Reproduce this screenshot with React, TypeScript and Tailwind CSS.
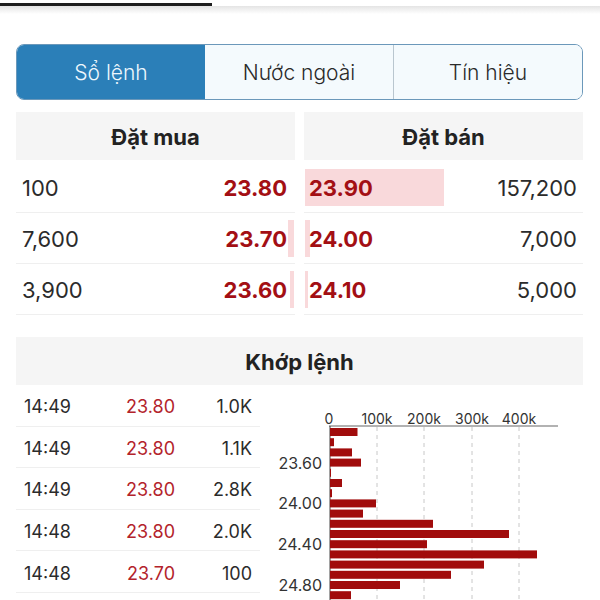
import React from "react";

const bids = [
  { qty: "100", price: "23.80", bar: 0 },
  { qty: "7,600", price: "23.70", bar: 6 },
  { qty: "3,900", price: "23.60", bar: 4 },
];

const asks = [
  { qty: "157,200", price: "23.90", bar: 139 },
  { qty: "7,000", price: "24.00", bar: 5 },
  { qty: "5,000", price: "24.10", bar: 3 },
];

const trades = [
  { time: "14:49", price: "23.80", vol: "1.0K" },
  { time: "14:49", price: "23.80", vol: "1.1K" },
  { time: "14:49", price: "23.80", vol: "2.8K" },
  { time: "14:48", price: "23.80", vol: "2.0K" },
  { time: "14:48", price: "23.70", vol: "100" },
];

const volumes = [27.5, 4, 22, 31, 1, 12, 2, 46, 33, 103, 179, 97, 207, 154, 121, 70, 21];

function VolumeChart() {
  // page coords shifted by (260, 385)
  const ox = 70;
  const ticks = [
    { x: 69, label: "0" },
    { x: 117, label: "100k" },
    { x: 164, label: "200k" },
    { x: 212, label: "300k" },
    { x: 259, label: "400k" },
  ];
  const ylabels = [
    { i: 3, label: "23.60" },
    { i: 7, label: "24.00" },
    { i: 11, label: "24.40" },
    { i: 15, label: "24.80" },
  ];
  return (
    <svg width="323" height="215" className="block" style={{ fontFamily: "Inter, sans-serif" }}>
      {ticks.slice(1).map((t) => (
        <line key={t.x} x1={t.x} x2={t.x} y1={42} y2={215} stroke="#c8c8c8" strokeWidth="1" strokeDasharray="4 4" />
      ))}
      {ticks.map((t) => (
        <text key={t.label} x={t.x} y={38.5} textAnchor="middle" fontSize="14" fill="#333">
          {t.label}
        </text>
      ))}
      <line x1={69} x2={298} y1={41} y2={41} stroke="#999" strokeWidth="1.5" />
      <line x1={ox} x2={ox} y1={41} y2={215} stroke="#444" strokeWidth="1" />
      {volumes.map((w, i) => (
        <rect key={i} x={ox} y={43 + i * 10.2} width={w} height={8} fill="#a10c0c" />
      ))}
      {ylabels.map((l) => (
        <text key={l.label} x={62} y={43 + l.i * 10.2 + 10} textAnchor="end" fontSize="16" fill="#333">
          {l.label}
        </text>
      ))}
    </svg>
  );
}

export default function App() {
  return (
    <div className="w-[600px] h-[600px] bg-white overflow-hidden text-[#222]" style={{ fontFamily: "Inter, 'Noto Sans', sans-serif" }}>
      <div className="pt-[3px]">
        <div className="h-[3px] w-[212px] bg-[#1f1f1f]" />
        <div className="h-[8px] bg-gradient-to-b from-[#e4e4e4] to-white" />
      </div>

      <div className="pl-4 pr-[17px]">
        {/* tabs */}
        <div className="mt-[30px] h-[56px] flex rounded-lg border border-[#6b98ba] overflow-hidden text-[21px] font-light">
          <div className="flex-1 flex items-center justify-center pt-[2px] bg-[#2b7fb8] text-[#eef7fd]">Sổ lệnh</div>
          <div className="flex-1 flex items-center justify-center pt-[2px] bg-[#f4fafd] text-[#2a2a2a] border-r border-[#b9c6cf]">
            Nước ngoài
          </div>
          <div className="flex-1 flex items-center justify-center pt-[2px] bg-[#f4fafd] text-[#2a2a2a]">Tín hiệu</div>
        </div>

        {/* order book */}
        <div className="mt-3 grid grid-cols-2 gap-x-[9px]">
          <div>
            <div className="h-[48px] bg-[#f5f5f5] flex items-center justify-center pt-[3px] text-[22px] font-bold">Đặt mua</div>
            <div className="mt-[2px]">
              {bids.map((b) => (
                <div key={b.price} className="relative h-[51px] border-b border-[#efefef] flex items-center justify-between pt-[3px] pl-[6px] pr-[8px]">
                  {b.bar > 0 && (
                    <div className="absolute right-[1px] top-[7px] bottom-[6px] bg-[#f9d9db]" style={{ width: b.bar }} />
                  )}
                  <span className="relative text-[22px] text-[#2b2b2b]">{b.qty}</span>
                  <span className="relative text-[22px] font-bold text-[#a30f14]">{b.price}</span>
                </div>
              ))}
            </div>
          </div>
          <div>
            <div className="h-[48px] bg-[#f5f5f5] flex items-center justify-center pt-[3px] text-[22px] font-bold">Đặt bán</div>
            <div className="mt-[2px]">
              {asks.map((a) => (
                <div key={a.price} className="relative h-[51px] border-b border-[#efefef] flex items-center justify-between pt-[3px] pl-[5px] pr-[6px]">
                  <div className="absolute left-[1px] top-[7px] bottom-[6px] bg-[#f9d9db]" style={{ width: a.bar }} />
                  <span className="relative text-[22px] font-bold text-[#a30f14]">{a.price}</span>
                  <span className="relative text-[22px] text-[#2b2b2b]">{a.qty}</span>
                </div>
              ))}
            </div>
          </div>
        </div>

        {/* matched orders */}
        <div className="mt-[22px] h-[48px] bg-[#f5f5f5] flex items-center justify-center pt-[2px] text-[22px] font-bold">Khớp lệnh</div>
        <div className="flex">
          <div className="w-[244px]">
            {trades.map((t, i) => (
              <div key={i} className="h-[41.6px] border-b border-[#efefef] flex items-center pt-[3px] text-[18px]">
                <span className="pl-2 w-[84px] text-[#2b2b2b]">{t.time}</span>
                <span className="w-[75px] text-right text-[#b3232b]">{t.price}</span>
                <span className="w-[77px] text-right text-[#2b2b2b]">{t.vol}</span>
              </div>
            ))}
          </div>
          <VolumeChart />
        </div>
      </div>
    </div>
  );
}
